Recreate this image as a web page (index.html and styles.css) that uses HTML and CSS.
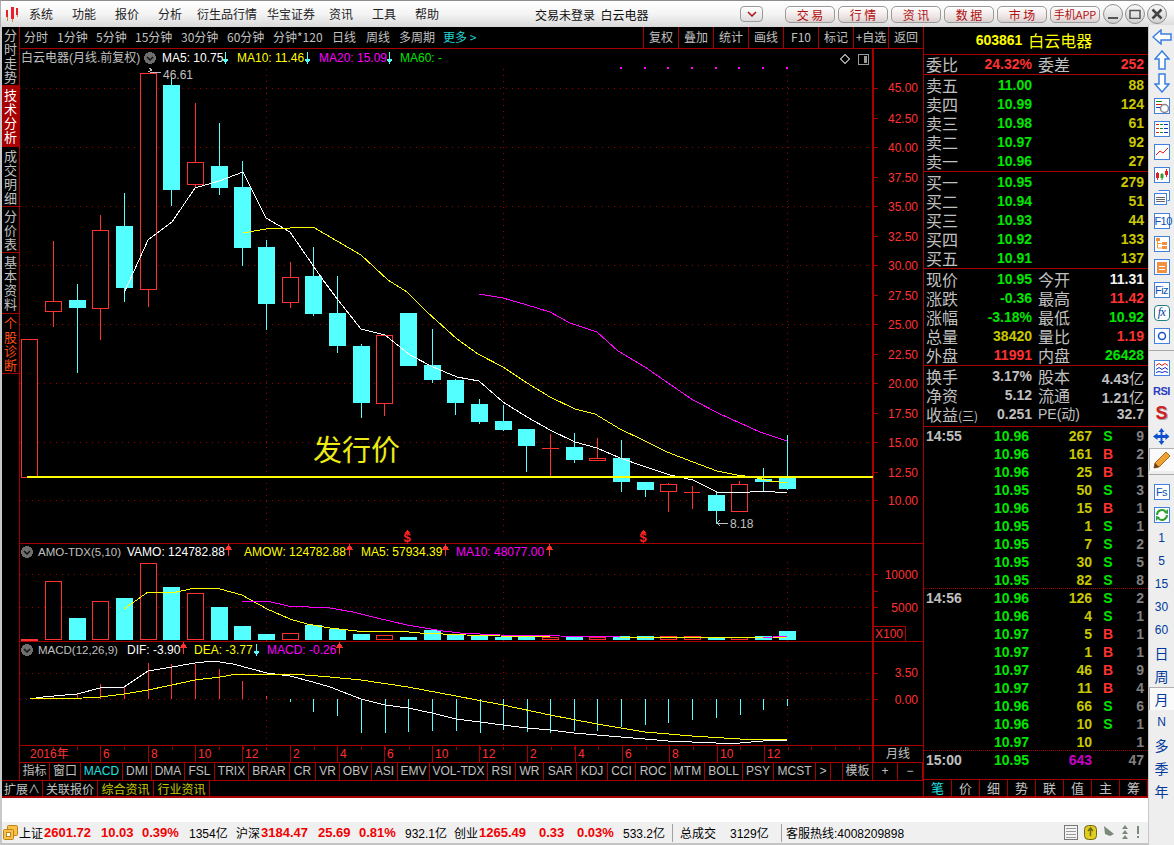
FILE: index.html
```html
<!DOCTYPE html>
<html lang="zh">
<head>
<meta charset="utf-8">
<title>白云电器</title>
<link rel="stylesheet" href="styles.css">
</head>
<body>
<div class="window">
  <header class="titlebar">
    <svg class="logo" width="14" height="16" viewBox="0 0 14 16"><path class="logo-a" d="M1 4h2v7H1zM6 1h3v12H6zM11 2h2v7h-2z"/><path class="logo-b" d="M2 11h1v4H2zM7 13h1v3H7zM12 9h1v2h-1z"/></svg>
    <nav class="menu"><span>系统</span><span>功能</span><span>报价</span><span>分析</span><span>衍生品行情</span><span>华宝证券</span><span>资讯</span><span>工具</span><span>帮助</span></nav>
    <div class="title-text">交易未登录&nbsp;&nbsp;白云电器</div>
    <button class="drop"><svg width="10" height="6" viewBox="0 0 10 6"><path class="chev" d="M1 1l4 4 4-4"/></svg></button>
    <div class="actions"><button>交 易</button><button>行 情</button><button>资 讯</button><button>数 据</button><button>市 场</button><button class="tight">手机APP</button></div>
    <div class="winctl">
      <span class="circle"><svg width="10" height="10" viewBox="0 0 10 10"><path class="wc" d="M0 8h10v2H0z"/></svg></span>
      <span class="circle"><svg width="12" height="10" viewBox="0 0 12 10"><path class="wc-o" d="M1 1.5h10v8H1z"/></svg></span>
      <span class="circle"><svg width="12" height="12" viewBox="0 0 12 12"><path class="wc-x" d="M1.5 1.5l9 9M10.5 1.5l-9 9"/></svg></span>
    </div>
  </header>

  <div class="below">
    <div class="content">
      <div class="upper">
        <div class="work">
          <div class="work-top">
            <aside class="tabs">
              <div class="tab h59">分时走势</div>
              <div class="tab h61 on">技术分析</div>
              <div class="tab h60">成交明细</div>
              <div class="tab h46">分价表</div>
              <div class="tab h61">基本资料</div>
              <div class="tab h60 orange">个股诊断</div>
            </aside>
            <section class="center">
              <div class="periods">
                <div class="p-left">
                  <span class="w33">分时</span><span class="w39">1分钟</span><span class="w39">5分钟</span><span class="w46">15分钟</span><span class="w46">30分钟</span><span class="w46">60分钟</span><span class="w59">分钟*120</span><span class="w34">日线</span><span class="w33">周线</span><span class="w44">多周期</span><span class="more">更多 &gt;</span>
                </div>
                <div class="p-right"><span>复权</span><span>叠加</span><span>统计</span><span>画线</span><span>F10</span><span>标记</span><span>+自选</span><span>返回</span></div>
              </div>

              <svg class="chart" width="903" height="713" viewBox="20 49 903 713">
                <!-- frame lines -->
                <g class="frame">
                  <path d="M873.5 49V762M872.5 49V762M20 543.5H923M20 641.5H923M20 745.5H923"/>
                  <path d="M873 88.5h5M873 118.5h5M873 147.5h5M873 177.5h5M873 206.5h5M873 236.5h5M873 265.5h5M873 295.5h5M873 324.5h5M873 354.5h5M873 383.5h5M873 413.5h5M873 442.5h5M873 472.5h5M873 500.5h5"/>
                  <path d="M873 574.5h5M873 591.5h5M873 607.5h5M873 673.5h5M873 699.5h5"/>
                  <path d="M100.5 746v16M148.5 746v16M195.5 746v16M242.5 746v16M290.5 746v16M337.5 746v16M384.5 746v16M432.5 746v16M479.5 746v16M527.5 746v16M575.5 746v16M622.5 746v16M669.5 746v16M717.5 746v16M764.5 746v16"/>
                  <path class="ticks" d="M53 748.5H873"/>
                  <path d="M873.5 626.5H905.5V641"/>
                </g>
                <!-- dotted grids -->
                <g class="dots">
                  <path d="M20 88H872M20 147H872M20 206H872M20 265H872M20 324H872M20 383H872M20 442H872M20 500H872"/>
                  <path d="M20 574H872M20 607H872M20 673H872M20 699H872"/>
                  <path d="M266.5 69V533M503.5 69V533M787.5 69V533M266.5 562V641M503.5 562V641M787.5 562V641M266.5 660V745M503.5 660V745M787.5 660V745"/>
                </g>

                <!-- candles -->
                <g class="dn">
                  <rect x="21.5" y="339.5" width="16" height="138"/>
                  <path d="M53.5 241V301M53.5 312V327"/><rect x="45.5" y="301.5" width="16" height="10"/>
                  <path d="M100.5 215V230M100.5 309V340"/><rect x="92.5" y="230.5" width="16" height="78"/>
                  <path d="M148.5 289V307"/><rect x="140.5" y="73.5" width="16" height="216"/>
                  <path d="M195.5 103V162M195.5 185V188"/><rect x="187.5" y="162.5" width="16" height="22"/>
                  <path d="M290.5 262V277M290.5 303V308"/><rect x="282.5" y="277.5" width="16" height="25"/>
                  <path d="M384.5 334V335M384.5 404V416"/><rect x="376.5" y="335.5" width="16" height="68"/>
                  <path d="M550.5 434V476M542 448.5H559"/>
                  <path d="M597.5 438V458"/><rect x="589.5" y="458.5" width="16" height="2"/>
                  <path d="M668.5 483V484M668.5 491V512"/><rect x="660.5" y="484.5" width="16" height="7"/>
                  <path d="M692.5 486V509M684 492.5H700"/>
                  <path d="M739.5 481V484"/><rect x="731.5" y="484.5" width="16" height="27"/>
                </g>
                <g class="up">
                  <path d="M77.5 284V300M77.5 308V373"/><rect x="69" y="300" width="17" height="8"/>
                  <path d="M124.5 193V226M124.5 288V302"/><rect x="116" y="226" width="17" height="62"/>
                  <path d="M171.5 78V85M171.5 190V206"/><rect x="163" y="85" width="17" height="105"/>
                  <path d="M219.5 123V166M219.5 188V195"/><rect x="211" y="166" width="17" height="22"/>
                  <path d="M242.5 161V187M242.5 248V266"/><rect x="234" y="187" width="17" height="61"/>
                  <path d="M266.5 240V247M266.5 304V330"/><rect x="258" y="247" width="17" height="57"/>
                  <path d="M313.5 247V276M313.5 314V316"/><rect x="305" y="276" width="17" height="38"/>
                  <path d="M337.5 276V313M337.5 346V353"/><rect x="329" y="313" width="17" height="33"/>
                  <path d="M361.5 344V346M361.5 403V418"/><rect x="353" y="346" width="17" height="57"/>
                  <rect x="400" y="313" width="17" height="53"/>
                  <path d="M432.5 329V365M432.5 380V383"/><rect x="424" y="365" width="17" height="15"/>
                  <path d="M455.5 379V380M455.5 403V415"/><rect x="447" y="380" width="17" height="23"/>
                  <path d="M479.5 399V404M479.5 422V424"/><rect x="471" y="404" width="17" height="18"/>
                  <path d="M503.5 405V421M503.5 430V431"/><rect x="495" y="421" width="17" height="9"/>
                  <path d="M526.5 446V472"/><rect x="518" y="429" width="17" height="17"/>
                  <path d="M574.5 433V447M574.5 460V463"/><rect x="566" y="447" width="17" height="13"/>
                  <path d="M621.5 440V458M621.5 482V492"/><rect x="613" y="458" width="17" height="24"/>
                  <path d="M645.5 490V497"/><rect x="637" y="482" width="17" height="8"/>
                  <path d="M716.5 491V495M716.5 511V524"/><rect x="708" y="495" width="17" height="16"/>
                  <path d="M763.5 468V479M763.5 482V491"/><rect x="755" y="479" width="17" height="3"/>
                  <path d="M787.5 435V478M787.5 489V490"/><rect x="779" y="478" width="17" height="11"/>
                </g>

                <!-- moving averages -->
                <polyline class="ma5" points="124,293 148,240 172,222 195,188 219,181 243,172 266,218 290,232 323,280 338,300 361,329 385,335 410,355 433,367 457,377 479,381 503,402 527,417 550,430 575,442 597,448 620,458 643,466 670,475 693,480 717,492 750,492 763,491 787,493"/>
                <polyline class="ma10" points="243,233 266,229 290,228 313,227 337,241 361,255 388,280 407,292 427,312 457,339 478,354 503,367 527,383 550,397 575,409 595,414 620,429 643,440 667,452 693,462 717,471 737,475 753,477 770,481 787,483"/>
                <polyline class="ma20" points="479,294 503,298 527,305 550,312 570,323 597,332 618,351 645,367 668,383 693,400 720,414 760,432 787,441"/>
                <path class="issue" d="M27 477H873"/>
                <text class="issue-text" x="313" y="461">发行价</text>
                <path class="mag-dots" d="M620 68h2M644 68h2M667 68h2M691 68h2M715 68h2M738 68h2M762 68h2M786 68h2"/>

                <!-- high / low marks -->
                <text class="t gray" x="163" y="79">46.61</text>
                <path class="mark" d="M148 72l4-2-3-2M150 72h11"/>
                <text class="t gray" x="730" y="528">8.18</text>
                <path class="mark" d="M720 520l-3 3 3 3M717 523h11"/>
                <text class="dollar" x="407" y="542">$</text><path class="tri" d="M407.5 530l3 3h-6z"/>
                <text class="dollar" x="643" y="542">$</text><path class="tri" d="M643.5 530l3 3h-6z"/>

                <!-- header of main pane -->
                <text class="t gray" x="21" y="62">白云电器(月线.前复权)</text>
                <circle class="disc" cx="150" cy="58" r="6"/><path class="disc-c" d="M147 57l3 3 3-3"/>
                <text class="t white" x="162" y="62">MA5: 10.75</text><path class="arr-c" d="M225.5 52v10M223 59l2.500 4 2.500-4z"/>
                <text class="t yellow" x="237" y="62">MA10: 11.46</text><path class="arr-c" d="M307.500 52v10M305 59l2.500 4 2.500-4z"/>
                <text class="t magenta" x="319" y="62">MA20: 15.09</text><path class="arr-c" d="M389.500 52v10M387 59l2.500 4 2.500-4z"/>
                <text class="t green" x="400" y="62">MA60: -</text>
                <path class="thin-gray" d="M845 54.500l4.500 4.500-4.500 4.500-4.500-4.500z"/>
                <rect class="thin-gray" x="858.500" y="54.500" width="10" height="10" rx="1"/><rect class="fill-gray" x="864" y="56" width="3" height="7"/>

                <!-- axis labels -->
                <g class="axis">
                  <text x="918" y="92">45.00</text><text x="918" y="123">42.50</text><text x="918" y="152">40.00</text><text x="918" y="182">37.50</text><text x="918" y="211">35.00</text><text x="918" y="241">32.50</text><text x="918" y="270">30.00</text><text x="918" y="300">27.50</text><text x="918" y="329">25.00</text><text x="918" y="359">22.50</text><text x="918" y="388">20.00</text><text x="918" y="418">17.50</text><text x="918" y="447">15.00</text><text x="918" y="477">12.50</text><text x="918" y="505">10.00</text>
                  <text x="918" y="579">10000</text><text x="918" y="612">5000</text><text x="918" y="677">3.50</text><text x="918" y="704">0.00</text>
                </g>
                <text class="t red" x="875" y="638">X100</text>

                <!-- volume pane -->
                <circle class="disc" cx="27" cy="552" r="6"/><path class="disc-c" d="M24 551l3 3 3-3"/>
                <text class="t gray narrow" x="38" y="556">AMO-TDX(5,10)</text>
                <text class="t white" x="127" y="556">VAMO: 124782.88</text><path class="arr-r" d="M228.500 556v-10M226 549l2.500-4 2.500 4z"/>
                <text class="t yellow" x="244" y="556">AMOW: 124782.88</text><path class="arr-r" d="M349.500 556v-10M347 549l2.500-4 2.500 4z"/>
                <text class="t yellow" x="361" y="556">MA5: 57934.39</text><path class="arr-r" d="M445.500 556v-10M443 549l2.500-4 2.500 4z"/>
                <text class="t magenta" x="456" y="556">MA10: 48077.00</text><path class="arr-r" d="M549.500 556v-10M547 549l2.500-4 2.500 4z"/>
                <rect class="solid-r" x="21" y="639" width="17" height="2"/>
                <g class="dn">
                  <rect x="45.500" y="581.500" width="16" height="58"/><rect x="92.500" y="601.500" width="16" height="38"/><rect x="140.500" y="563.500" width="16" height="76"/><rect x="187.500" y="593.500" width="16" height="46"/><rect x="282.500" y="633.500" width="16" height="6"/><rect x="376.500" y="635.500" width="16" height="4"/><rect x="542.500" y="637.500" width="16" height="2"/><rect x="589.500" y="637.500" width="16" height="2"/><rect x="660.500" y="636.500" width="16" height="3"/><rect x="684.500" y="636.500" width="16" height="3"/><rect x="731.500" y="637.500" width="16" height="2"/>
                </g>
                <g class="up">
                  <rect x="69" y="618" width="17" height="22"/><rect x="116" y="598" width="17" height="42"/><rect x="163" y="587" width="17" height="53"/><rect x="211" y="607" width="17" height="33"/><rect x="234" y="626" width="17" height="14"/><rect x="258" y="634" width="17" height="6"/><rect x="305" y="625" width="17" height="15"/><rect x="329" y="629" width="17" height="11"/><rect x="353" y="634" width="17" height="6"/><rect x="400" y="637" width="17" height="3"/><rect x="424" y="630" width="17" height="10"/><rect x="447" y="635" width="17" height="5"/><rect x="471" y="636" width="17" height="4"/><rect x="495" y="637" width="17" height="3"/><rect x="518" y="636" width="17" height="4"/><rect x="566" y="637" width="17" height="3"/><rect x="613" y="636" width="17" height="4"/><rect x="637" y="636" width="17" height="4"/><rect x="708" y="638" width="17" height="2"/><rect x="755" y="636" width="17" height="4"/><rect x="779" y="631" width="17" height="9"/>
                </g>
                <polyline class="ma10" points="124,609 148,592 172,593 195,588 220,589 242,595 267,609 290,619 307,624 330,628 357,631 397,631 420,633 443,634 466,635 500,636 550,637 620,637 700,638 787,637"/>
                <polyline class="ma20" points="242,601 267,601 288,606 330,608 353,612 377,618 407,625 443,631 460,633 500,635 560,636 620,637 773,637 787,636"/>

                <!-- macd pane -->
                <circle class="disc" cx="27" cy="650" r="6"/><path class="disc-c" d="M24 649l3 3 3-3"/>
                <text class="t gray narrow" x="38" y="654">MACD(12,26,9)</text>
                <text class="t white" x="127" y="654">DIF: -3.90</text><path class="arr-r" d="M183.500 654v-10M181 647l2.500-4 2.500 4z"/>
                <text class="t yellow" x="194" y="654">DEA: -3.77</text><path class="arr-c" d="M256.500 644v10M254 651l2.500 4 2.500-4z"/>
                <text class="t magenta" x="267" y="654">MACD: -0.26</text><path class="arr-r" d="M339.500 654v-10M337 647l2.500-4 2.500 4z"/>
                <path class="dn-line" d="M53.500 699v-3M77.500 699v-5M100.500 699v-15M124.500 699v-13M148.500 699v-36M171.500 699v-35M195.500 699v-35M219.500 699v-30M242.500 699v-18M266.500 699v-3"/>
                <path class="up-line" d="M290.500 699v3M313.500 699v13M337.500 699v17M361.500 699v34M385.500 699v34M408.500 699v33M432.500 699v32M456.500 699v32M480.500 699v34M503.500 699v31M527.500 699v33M550.500 699v34M574.500 699v32M597.500 699v32M621.500 699v28M645.500 699v26M668.500 699v24M692.500 699v21M716.500 699v19M740.500 699v16M763.500 699v11M787.500 699v7"/>
                <polyline class="ma5" points="30,699 43,697 65,695 77,694 100,688 124,687 148,671 172,667 195,663 213,661 233,664 267,673 290,676 313,682 330,687 361,699 385,705 408,708 432,713 456,719 480,722 503,725 527,728 550,730 574,733 597,735 621,737 645,739 668,741 692,742 716,743 740,743 763,741 787,740"/>
                <polyline class="ma10" points="30,699 83,698 100,697 124,694 148,690 172,685 195,680 220,677 237,674 293,674 330,677 361,680 408,687 456,696 503,705 550,715 597,724 645,732 692,736 740,739 787,739"/>

                <!-- dates -->
                <g class="t red">
                  <text x="30" y="758">2016年</text><text x="103" y="758">6</text><text x="151" y="758">8</text><text x="198" y="758">10</text><text x="245" y="758">12</text><text x="293" y="758">2</text><text x="340" y="758">4</text><text x="387" y="758">6</text><text x="435" y="758">10</text><text x="482" y="758">12</text><text x="530" y="758">2</text><text x="578" y="758">4</text><text x="625" y="758">6</text><text x="672" y="758">8</text><text x="720" y="758">10</text><text x="767" y="758">12</text>
                </g>
                <text class="t gray" x="886" y="758">月线</text>
              </svg>

              <div class="indicators">
                <span>指标</span><span>窗口</span><span class="cyan">MACD</span><span>DMI</span><span>DMA</span><span>FSL</span><span>TRIX</span><span>BRAR</span><span>CR</span><span>VR</span><span>OBV</span><span>ASI</span><span>EMV</span><span>VOL-TDX</span><span>RSI</span><span>WR</span><span>SAR</span><span>KDJ</span><span>CCI</span><span>ROC</span><span>MTM</span><span>BOLL</span><span>PSY</span><span>MCST</span><span>&gt;</span><span></span><span>模板</span><span>+</span><span>−</span>
              </div>
            </section>
          </div>
          <div class="expand"><span class="w41">扩展∧</span><span class="w55">关联报价</span><span class="w56 yl">综合资讯</span><span class="w56 yl">行业资讯</span></div>
        </div>

        <aside class="side">
          <div class="code"><b>603861</b><span>白云电器</span></div>
          <div class="row four bb h20"><i>委比</i><b class="r">24.32%</b><i>委差</i><b class="r">252</b></div>
          <div class="block">
            <div class="row three"><i>卖五</i><b class="g">11.00</b><b class="y">88</b></div>
            <div class="row three"><i>卖四</i><b class="g">10.99</b><b class="y">124</b></div>
            <div class="row three"><i>卖三</i><b class="g">10.98</b><b class="y">61</b></div>
            <div class="row three"><i>卖二</i><b class="g">10.97</b><b class="y">92</b></div>
            <div class="row three"><i>卖一</i><b class="g">10.96</b><b class="y">27</b></div>
          </div>
          <div class="block">
            <div class="row three"><i>买一</i><b class="g">10.95</b><b class="y">279</b></div>
            <div class="row three"><i>买二</i><b class="g">10.94</b><b class="y">51</b></div>
            <div class="row three"><i>买三</i><b class="g">10.93</b><b class="y">44</b></div>
            <div class="row three"><i>买四</i><b class="g">10.92</b><b class="y">133</b></div>
            <div class="row three"><i>买五</i><b class="g">10.91</b><b class="y">137</b></div>
          </div>
          <div class="block">
            <div class="row four"><i>现价</i><b class="g">10.95</b><i>今开</i><b class="w">11.31</b></div>
            <div class="row four"><i>涨跌</i><b class="g">-0.36</b><i>最高</i><b class="r">11.42</b></div>
            <div class="row four"><i>涨幅</i><b class="g">-3.18%</b><i>最低</i><b class="g">10.92</b></div>
            <div class="row four"><i>总量</i><b class="y">38420</b><i>量比</i><b class="r">1.19</b></div>
            <div class="row four"><i>外盘</i><b class="r">11991</b><i>内盘</i><b class="g">26428</b></div>
          </div>
          <div class="block b61">
            <div class="row four"><i>换手</i><b class="s">3.17%</b><i>股本</i><b class="s">4.43<em>亿</em></b></div>
            <div class="row four"><i>净资</i><b class="s">5.12</b><i>流通</i><b class="s">1.21<em>亿</em></b></div>
            <div class="row four"><i>收益<small>(三)</small></i><b class="s">0.251</b><i class="pe">PE(动)</i><b class="s">32.7</b></div>
          </div>
          <div class="trades">
            <div class="tr"><b class="s">14:55</b><b class="g">10.96</b><b class="y">267</b><b class="sg">S</b><b class="n">9</b></div>
            <div class="tr"><b></b><b class="g">10.96</b><b class="y">161</b><b class="sr">B</b><b class="n">2</b></div>
            <div class="tr"><b></b><b class="g">10.96</b><b class="y">25</b><b class="sr">B</b><b class="n">1</b></div>
            <div class="tr"><b></b><b class="g">10.95</b><b class="y">50</b><b class="sg">S</b><b class="n">3</b></div>
            <div class="tr"><b></b><b class="g">10.96</b><b class="y">15</b><b class="sr">B</b><b class="n">1</b></div>
            <div class="tr"><b></b><b class="g">10.95</b><b class="y">1</b><b class="sg">S</b><b class="n">1</b></div>
            <div class="tr"><b></b><b class="g">10.95</b><b class="y">7</b><b class="sg">S</b><b class="n">2</b></div>
            <div class="tr"><b></b><b class="g">10.95</b><b class="y">30</b><b class="sg">S</b><b class="n">5</b></div>
            <div class="tr last"><b></b><b class="g">10.95</b><b class="y">82</b><b class="sg">S</b><b class="n">8</b></div>
            <div class="tr"><b class="s">14:56</b><b class="g">10.96</b><b class="y">126</b><b class="sg">S</b><b class="n">2</b></div>
            <div class="tr"><b></b><b class="g">10.96</b><b class="y">4</b><b class="sg">S</b><b class="n">1</b></div>
            <div class="tr"><b></b><b class="g">10.97</b><b class="y">5</b><b class="sr">B</b><b class="n">1</b></div>
            <div class="tr"><b></b><b class="g">10.97</b><b class="y">1</b><b class="sr">B</b><b class="n">1</b></div>
            <div class="tr"><b></b><b class="g">10.97</b><b class="y">46</b><b class="sr">B</b><b class="n">9</b></div>
            <div class="tr"><b></b><b class="g">10.97</b><b class="y">11</b><b class="sr">B</b><b class="n">4</b></div>
            <div class="tr"><b></b><b class="g">10.96</b><b class="y">66</b><b class="sg">S</b><b class="n">6</b></div>
            <div class="tr"><b></b><b class="g">10.96</b><b class="y">10</b><b class="sg">S</b><b class="n">1</b></div>
            <div class="tr last"><b></b><b class="g">10.97</b><b class="y">10</b><b></b><b class="n">1</b></div>
            <div class="tr"><b class="s">15:00</b><b class="g">10.95</b><b class="p">643</b><b></b><b class="n">47</b></div>
          </div>
          <div class="side-tabs"><span class="cyan">笔</span><span>价</span><span>细</span><span>势</span><span>联</span><span>值</span><span>主</span><span>筹</span></div>
        </aside>
      </div>

      <div class="strip"></div>

      <footer class="status">
        <svg class="st-logo" width="15" height="15" viewBox="0 0 15 15"><rect class="sl-a" x="4.500" y="0.500" width="10" height="10" rx="1"/><rect class="sl-b" x="0.500" y="4.500" width="10" height="10" rx="1"/><rect class="sl-c" x="3.500" y="7.500" width="4" height="4"/></svg>
        <div class="st-grid">
          <span>上证</span><b>2601.72</b><b>10.03</b><b>0.39%</b><span class="num">1354亿</span>
          <span>沪深</span><b>3184.47</b><b>25.69</b><b>0.81%</b><span class="num">932.1亿</span>
          <span>创业</span><b>1265.49</b><b>0.33</b><b>0.03%</b><span class="num">533.2亿</span>
          <span class="sep"></span><span>总成交</span><span class="num">3129亿</span>
          <span class="sep"></span><span class="num">客服热线:4008209898</span>
        </div>
        <div class="st-icons">
          <svg width="14" height="15" viewBox="0 0 14 15"><rect class="doc-o" x="0.500" y="0.500" width="13" height="14"/><path class="doc-l" d="M2 3.500h10M2 6.500h10M2 9.500h10M2 12.500h10"/></svg>
          <svg width="13" height="15" viewBox="0 0 13 15"><rect class="coin" x="0.500" y="0.500" width="12" height="14" rx="4"/><path class="coin-m" d="M6.500 3v8M4 6l2.500-3 2.500 3"/></svg>
          <svg width="12" height="15" viewBox="0 0 12 15"><path class="dish" d="M1 1l10 8-4 2-5-2zM5 10v4M2 14h7"/></svg>
          <svg width="8" height="15" viewBox="0 0 8 15"><path class="dish" d="M4 0l3 4H1zM4 5l3 4H1zM4 10l3 4H1z"/></svg>
          <svg width="6" height="15" viewBox="0 0 6 15"><path class="dish" d="M2 1h2v8H2zM2 11h2v2H2z"/></svg>
        </div>
      </footer>
    </div>

    <nav class="toolbar">
      <a><svg width="20" height="16" viewBox="0 0 20 16"><path class="ar" d="M1 8l8-7v4h10v6H9v4z"/></svg></a>
      <a><svg width="16" height="20" viewBox="0 0 16 20"><path class="ar" d="M8 1l7 8h-4v10H5V9H1z"/></svg></a>
      <a><svg width="16" height="20" viewBox="0 0 16 20"><path class="ar" d="M8 19l7-8h-4V1H5v10H1z"/></svg></a>
      <a><svg width="16" height="16" viewBox="0 0 16 16"><rect class="bx" x="0.500" y="0.500" width="15" height="15"/><path class="l-g" d="M2 3.500h6"/><path class="l-r" d="M2 6.500h6"/><path class="l-b" d="M2 9.500h4"/><circle class="clk" cx="10.500" cy="10.500" r="4"/></svg></a>
      <a><svg width="16" height="16" viewBox="0 0 16 16"><rect class="bx" x="0.500" y="0.500" width="15" height="15"/><path class="l-r" d="M2 3.500h3M2 7.500h3M2 11.500h3"/><path class="l-g" d="M6 3.500h3M6 7.500h3M6 11.500h3"/><path class="l-b" d="M10 3.500h4M10 7.500h4M10 11.500h4"/></svg></a>
      <a><svg width="16" height="16" viewBox="0 0 16 16"><rect class="bx" x="0.500" y="0.500" width="15" height="15"/><path class="l-r" d="M2 11l4-4 3 2 5-5"/></svg></a>
      <a><svg width="16" height="16" viewBox="0 0 16 16"><rect class="bx" x="0.500" y="0.500" width="15" height="15"/><path class="l-r" d="M3.500 5v8"/><rect class="f-r" x="2" y="6" width="3" height="5"/><path class="l-g" d="M8 6v7"/><rect class="f-g" x="6.500" y="7" width="3" height="4"/><path class="l-r" d="M12.500 2v8"/><rect class="f-r" x="11" y="4" width="3" height="4"/></svg></a>
      <a><svg width="16" height="15" viewBox="0 0 16 15"><path class="bx" d="M4.500 0.500h11v10h-2"/><rect class="bx" x="0.500" y="3.500" width="12" height="11"/><path class="l-k" d="M2 7.500h9M2 9.500h9M2 11.500h9"/></svg></a>
      <a><span class="fbox">F10</span></a>
      <a><svg width="16" height="16" viewBox="0 0 16 16"><rect class="bx" x="0.500" y="0.500" width="15" height="15"/><path class="l-o" d="M3.500 4v8h4M3.500 7.500h4"/><rect class="f-o" x="2" y="2" width="4" height="3"/><rect class="f-o" x="8" y="6" width="5" height="3"/><rect class="f-o" x="8" y="10" width="5" height="3"/></svg></a>
      <a><svg width="16" height="16" viewBox="0 0 16 16"><rect class="bx" x="0.500" y="0.500" width="15" height="15"/><rect class="f-o" x="3" y="3" width="10" height="11"/><path class="l-w" d="M5 7.500h6M5 10.500h6"/></svg></a>
      <a><span class="fbox">Fiz</span></a>
      <a><span class="fbox fx"><i>fx</i></span></a>
      <a><svg width="16" height="16" viewBox="0 0 16 16"><rect class="bx" x="0.500" y="0.500" width="15" height="15"/><circle class="ar-thick" cx="8" cy="8" r="3.500"/></svg></a>
      <hr>
      <a><svg width="16" height="16" viewBox="0 0 16 16"><rect class="bx" x="0.500" y="0.500" width="15" height="15"/><path class="l-r" d="M2 5.500l3-2 3 2 3-2 3 2"/><path class="l-b" d="M2 9.500l3-2 3 2 3-2 3 2"/><path class="l-b" d="M2 12.500l3-1 3 1 3-1 3 1"/></svg></a>
      <a class="rsi">RSI</a>
      <a class="bigs">S</a>
      <a><svg width="17" height="17" viewBox="0 0 17 17"><path class="f-bl" d="M8.500 0l3 4h-2v3h3v-2l4 3.500-4 3.500v-2h-3v3h2l-3 4-3-4h2v-3h-3v2L0 8.500 4.500 5v2h3V4h-2z"/></svg></a>
      <a class="active"><svg width="18" height="18" viewBox="0 0 18 18"><path class="pen" d="M13 1l4 4-11 11-5 1 1-5z"/><path class="pen-t" d="M2 12l4 4-5 1z"/></svg></a>
      <hr>
      <a><span class="fbox">Fs</span></a>
      <a><svg width="16" height="16" viewBox="0 0 16 16"><rect class="bx" x="0.500" y="0.500" width="15" height="15"/><path class="rec" d="M3 8a5 5 0 0 1 9-3M13 8a5 5 0 0 1-9 3"/><path class="f-g" d="M10 6l4 1V2zM6 10l-4-1v5z"/></svg></a>
      <a class="lbl">1</a><a class="lbl">5</a><a class="lbl">15</a><a class="lbl">30</a><a class="lbl">60</a>
      <a class="lbl cj">日</a><a class="lbl cj">周</a><a class="lbl cj active">月</a><a class="lbl">N</a><a class="lbl cj">多</a><a class="lbl cj">季</a><a class="lbl cj">年</a>
    </nav>
  </div>
</div>
</body>
</html>
```

FILE: styles.css
```css
* { box-sizing: border-box; }
html, body { margin: 0; padding: 0; height: 845px; overflow: hidden; }
body { font: 12px "Liberation Sans", "Noto Sans CJK SC", sans-serif; background: #f0f0f0; color: #000; }
.window { width: 1174px; height: 845px; display: flex; flex-direction: column; }

/* title bar */
.titlebar { height: 27px; flex: none; display: flex; align-items: center; border-top: 1px solid #8c8c8c; border-left: 1px solid #b0b0b0; background: linear-gradient(#ffffff, #f4f4f4 50%, #d9d9d9); font-family: "Noto Sans CJK SC", sans-serif; position: relative; }
.logo { margin-left: 4px; flex: none; }
.logo-a { fill: #e8202a; }
.logo-b { fill: #c58a4a; }
.menu { display: grid; grid-template-columns: 43px 43px 43px 39px 70px 62px 43px 43px 43px; margin-left: 10px; width: 429px; flex: none; color: #222; line-height: 16px; }
.menu span { white-space: nowrap; }
.title-text { margin-left: 77px; width: 127px; flex: none; white-space: nowrap; color: #111; }
.drop { width: 23px; height: 16px; margin-left: 78px; flex: none; padding: 0; border: 1px solid #9a9a9a; border-radius: 4px; background: linear-gradient(#fff, #ddd); display: flex; align-items: center; justify-content: center; }
.chev { fill: none; stroke: #b01010; stroke-width: 1.500; }
.actions { display: flex; gap: 3px; margin-left: 22px; flex: none; }
.actions button { width: 50px; height: 17px; padding: 0; border: 1px solid #9a9a9a; border-radius: 5px; background: linear-gradient(#fff, #f0e6e6 60%, #d8d0d0); color: #b01010; font: 12px/15px "Noto Sans CJK SC", sans-serif; white-space: nowrap; }
.actions button.tight { font-size: 11px; }
.winctl { display: flex; gap: 2px; margin-left: 3px; flex: none; }
.circle { width: 20px; height: 20px; border: 1px solid #8e8e8e; border-radius: 50%; background: linear-gradient(#f8f8f8, #d0d0d0); display: flex; align-items: center; justify-content: center; }
.wc { fill: #555; }
.wc-o { fill: none; stroke: #555; stroke-width: 1.500; }
.wc-x { fill: none; stroke: #444; stroke-width: 2.500; }

/* page regions */
.below { flex: 1; display: flex; min-height: 0; }
.content { width: 1148px; flex: none; display: flex; flex-direction: column; background: #c4c4c4; }
.upper { height: 771px; flex: none; display: flex; border-left: 2px solid #c8c8c8; background: #000; }
.work { width: 921px; flex: none; display: flex; flex-direction: column; }
.work-top { height: 753px; flex: none; display: flex; }

/* left tabs */
.tabs { width: 18px; flex: none; border-right: 1px solid #a80000; display: flex; flex-direction: column; background: #000; }
.tab { flex: none; width: 17px; padding: 0 2px; border-bottom: 1px solid #a80000; color: #c0c0c0; font: 13px/14px "Noto Sans CJK SC", sans-serif; word-break: break-all; display: flex; align-items: center; }
.tab.on { background: #a80000; color: #fff; }
.tab.orange { color: #ff4a12; }
.h59 { height: 59px; }
.h61 { height: 61px; }
.h60 { height: 60px; }
.h46 { height: 46px; }

/* centre column */
.center { width: 903px; flex: none; display: flex; flex-direction: column; background: #000; }
.periods { height: 22px; flex: none; border-bottom: 1px solid #a80000; display: flex; justify-content: space-between; color: #c0c0c0; font-family: "Noto Sans CJK SC", sans-serif; line-height: 20px; }
.p-left { display: flex; padding-left: 4px; white-space: nowrap; }
.w33 { width: 33px; flex: none; }
.w34 { width: 34px; flex: none; }
.w39 { width: 39px; flex: none; }
.w44 { width: 44px; flex: none; }
.w46 { width: 46px; flex: none; }
.w59 { width: 59px; flex: none; }
.w41 { width: 41px; }
.w55 { width: 55px; }
.w56 { width: 56px; }
.more { color: #22d6d6; }
.p-right { display: flex; }
.p-right span { width: 35px; border-left: 1px solid #a80000; text-align: center; white-space: nowrap; }
.chart { display: block; flex: none; background: #000; shape-rendering: crispEdges; }

/* chart parts */
.frame path { fill: none; stroke: #a80000; stroke-width: 1; }
.frame path.ticks { stroke-width: 3; stroke-dasharray: 1 22.700; }
.dots path { fill: none; stroke: #a00000; stroke-width: 1; stroke-dasharray: 1 5; }
.dn rect, .dn path { fill: #000; stroke: #ff3232; stroke-width: 1; }
.up rect { fill: #54ffff; }
.up path { fill: none; stroke: #54ffff; stroke-width: 1; }
.dn-line { fill: none; stroke: #ff3232; stroke-width: 1; }
.up-line { fill: none; stroke: #54ffff; stroke-width: 1; }
.solid-r { fill: #ff3232; }
.ma5, .ma10, .ma20 { fill: none; stroke-width: 1; }
.ma5 { stroke: #ffffff; }
.ma10 { stroke: #ffff00; }
.ma20 { stroke: #ff00ff; }
.issue { fill: none; stroke: #ffff00; stroke-width: 2; }
.issue-text { font: 29px "Noto Sans CJK SC", sans-serif; fill: #ecec14; }
.mag-dots { fill: none; stroke: #ff00ff; stroke-width: 2; }
.mark { fill: none; stroke: #c0c0c0; stroke-width: 1; }
.dollar { font: bold 13px "Liberation Sans", sans-serif; fill: #ff2020; text-anchor: middle; }
.tri { fill: #ff2020; }
.disc { fill: #6e6e6e; }
.disc-c { fill: none; stroke: #101010; stroke-width: 1.500; shape-rendering: geometricPrecision; }
.t { font: 12px "Liberation Sans", "Noto Sans CJK SC", sans-serif; }
.t.narrow { font-size: 11.5px; }
.gray { fill: #c0c0c0; }
.white { fill: #ffffff; }
.yellow { fill: #ffff00; }
.magenta { fill: #ff00ff; }
.green { fill: #00e600; }
.red { fill: #ff3232; }
.arr-c { fill: #54ffff; stroke: #54ffff; stroke-width: 1; }
.arr-r { fill: #ff3232; stroke: #ff3232; stroke-width: 1; }
.thin-gray { fill: none; stroke: #9a9a9a; stroke-width: 1; }
.fill-gray { fill: #9a9a9a; }
.axis text { font: 12px "Liberation Sans", sans-serif; fill: #ff3232; text-anchor: end; }

/* indicator tabs */
.indicators { height: 18px; flex: none; display: grid; grid-template-columns: 30px 31px 42px 29px 33px 30px 34px 41px 26px 24px 32px 26px 32px 58px 28px 28px 33px 31px 28px 35px 34px 38px 31px 42px 15px 12px 30px 25px 25px; border-top: 1px solid #a80000; color: #c0c0c0; }
.indicators span { border-right: 1px solid #a80000; text-align: center; line-height: 17px; white-space: nowrap; }
.cyan { color: #22e0e0; }
.expand { height: 18px; flex: none; display: flex; border-top: 1px solid #a80000; border-bottom: 2px solid #a80000; color: #c0c0c0; font-family: "Noto Sans CJK SC", sans-serif; line-height: 15px; background: #000; }
.expand span { border-right: 1px solid #a80000; text-align: center; flex: none; white-space: nowrap; }
.expand .yl { color: #c8c800; }

/* quote panel */
.side { width: 225px; flex: none; border-left: 1px solid #a80000; display: flex; flex-direction: column; background: #000; color: #c0c0c0; }
.code { height: 28px; flex: none; border-bottom: 1px solid #a80000; display: flex; justify-content: center; gap: 6px; color: #ffff00; line-height: 27px; white-space: nowrap; padding-right: 4px; }
.code b { font: bold 14px/27px "Liberation Sans", sans-serif; }
.code span { font: 16px/27px "Noto Sans CJK SC", sans-serif; }
.row { display: grid; height: 19px; padding-left: 2px; font: bold 14px/19px "Liberation Sans", sans-serif; white-space: nowrap; }
.row i { font: 16px/19px "Noto Sans CJK SC", sans-serif; font-style: normal; color: #c0c0c0; overflow: visible; }
.row small { font-size: 12px; }
.row b { text-align: right; font-weight: bold; }
.row .pe { font: 14px/19px "Liberation Sans", "Noto Sans CJK SC", sans-serif; }
.row em { font: normal 15px "Noto Sans CJK SC", sans-serif; }
.four { grid-template-columns: 36px 70px 42px 70px; }
.four i:nth-child(3) { margin-left: 6px; }
.three { grid-template-columns: 36px 70px 112px; }
.h20 { height: 20px; }
.bb { border-bottom: 1px solid #a80000; }
.block { flex: none; height: 97px; padding-top: 1px; border-bottom: 1px solid #a80000; }
.block.b61 { height: 61px; }
.trades { flex: none; height: 353px; border-bottom: 1px solid #a80000; }
.tr { display: grid; height: 18px; padding-left: 2px; grid-template-columns: 50px 53px 63px 32px 20px; font: bold 14px/18px "Liberation Sans", sans-serif; }
.tr b { text-align: right; }
.tr b:nth-child(4) { text-align: center; }
.tr b:first-child { text-align: left; }
.tr.last { border-bottom: 1px dotted #a00000; }
.g { color: #00e600; }
.y { color: #c8c800; }
.r { color: #ff3232; }
.w { color: #f4f4f4; }
.s { color: #c0c0c0; }
.n { color: #808080; }
.p { color: #c800c8; }
.sg { color: #00e600; }
.sr { color: #ff3232; }
.side-tabs { flex: 1; display: grid; grid-template-columns: repeat(8, 1fr); font: 13px/16px "Noto Sans CJK SC", sans-serif; border-bottom: 2px solid #a80000; }
.side-tabs span { border-right: 1px solid #a80000; text-align: center; }

/* strip and status bar */
.strip { height: 24px; flex: none; background: #fff; border-left: 2px solid #c8c8c8; }
.status { height: 21px; flex: none; display: flex; align-items: center; background: #f0f0f0; border-left: 2px solid #c8c8c8; position: relative; }
.st-logo { margin-left: 1px; flex: none; }
.sl-a, .sl-b { fill: #f6c04a; stroke: #c08410; }
.sl-c { fill: #fff; stroke: #c08410; }
.st-grid { display: grid; grid-template-columns: 25px 57px 41px 47px 47px 25px 57px 41px 46px 49px 25px 60px 38px 46px 49px 8px 50px 51px 5px 200px; margin-left: 1px; flex: none; white-space: nowrap; font: 12px "Noto Sans CJK SC", sans-serif; align-items: center; }
.st-grid b { font: bold 13px "Liberation Sans", sans-serif; color: #f00000; }
.st-grid .num { font-family: "Liberation Sans", "Noto Sans CJK SC", sans-serif; }
.st-grid .sep { display: block; width: 1px; height: 18px; background: #a0a0a0; }
.st-icons { position: absolute; left: 1062px; top: 3px; display: flex; gap: 6px; align-items: center; }
.doc-o { fill: #f4f4f4; stroke: #777; }
.doc-l { fill: none; stroke: #999; }
.coin { fill: #e2cb22; stroke: #6b6b10; }
.coin-m { fill: none; stroke: #6b6b10; stroke-width: 1.500; }
.dish { fill: #7a8a7a; stroke: none; }

/* right toolbar */
.toolbar { width: 26px; flex: none; background: #eeeeee; border-left: 1px solid #c8c8c8; display: flex; flex-direction: column; margin-top: -2px; position: relative; }
.toolbar a { height: 23px; flex: none; display: flex; align-items: center; justify-content: center; }
.toolbar hr { height: 9px; flex: none; width: 100%; margin: 0; border: 0; background: linear-gradient(#eeeeee 3px, #a8a8a8 3px, #a8a8a8 4px, #eeeeee 4px); }
.toolbar .active { background: #fafafa; box-shadow: inset 1px 1px 0 #b0b0b0; }
.lbl { color: #003a9c; font: 12px "Liberation Sans", sans-serif; }
.toolbar .lbl.cj { font: 14px/18px "Noto Sans CJK SC", sans-serif; }
.ar { fill: #fff; stroke: #3a80e0; stroke-width: 1.500; }
.ar-thick { fill: none; stroke: #1a50c0; stroke-width: 1.500; }
.bx { fill: #fff; stroke: #4080e0; }
.l-r { fill: none; stroke: #e02020; }
.l-g { fill: none; stroke: #10901a; }
.l-b { fill: none; stroke: #1030c0; }
.l-k { fill: none; stroke: #666; }
.l-o { fill: none; stroke: #f0a020; }
.l-w { fill: none; stroke: #fff; }
.f-r { fill: #e02020; }
.f-g { fill: #30a030; }
.f-o { fill: #f09040; }
.f-bl { fill: #1050d0; }
.clk { fill: #fff; stroke: #888; stroke-width: 1.500; }
.rec { fill: none; stroke: #30a030; stroke-width: 2; }
.pen { fill: #f0a030; stroke: #a86818; }
.pen-t { fill: #604020; }
.fbox { width: 16px; height: 16px; border: 1px solid #4080e0; background: #fff; color: #1050b0; font: 11px/14px "Liberation Sans", sans-serif; text-align: center; display: block; white-space: nowrap; letter-spacing: -.6px; }
.fbox.fx { border-color: #208080; border-radius: 4px; font: italic 12px/13px "Liberation Serif", serif; color: #003a9c; }
.rsi { color: #2a3cc0; font: bold 11px "Liberation Sans", sans-serif; letter-spacing: -.5px; }
.bigs { color: #d02020; font: bold 18px "Liberation Sans", sans-serif; text-shadow: 1px 1px #a0a0a0; }
```
